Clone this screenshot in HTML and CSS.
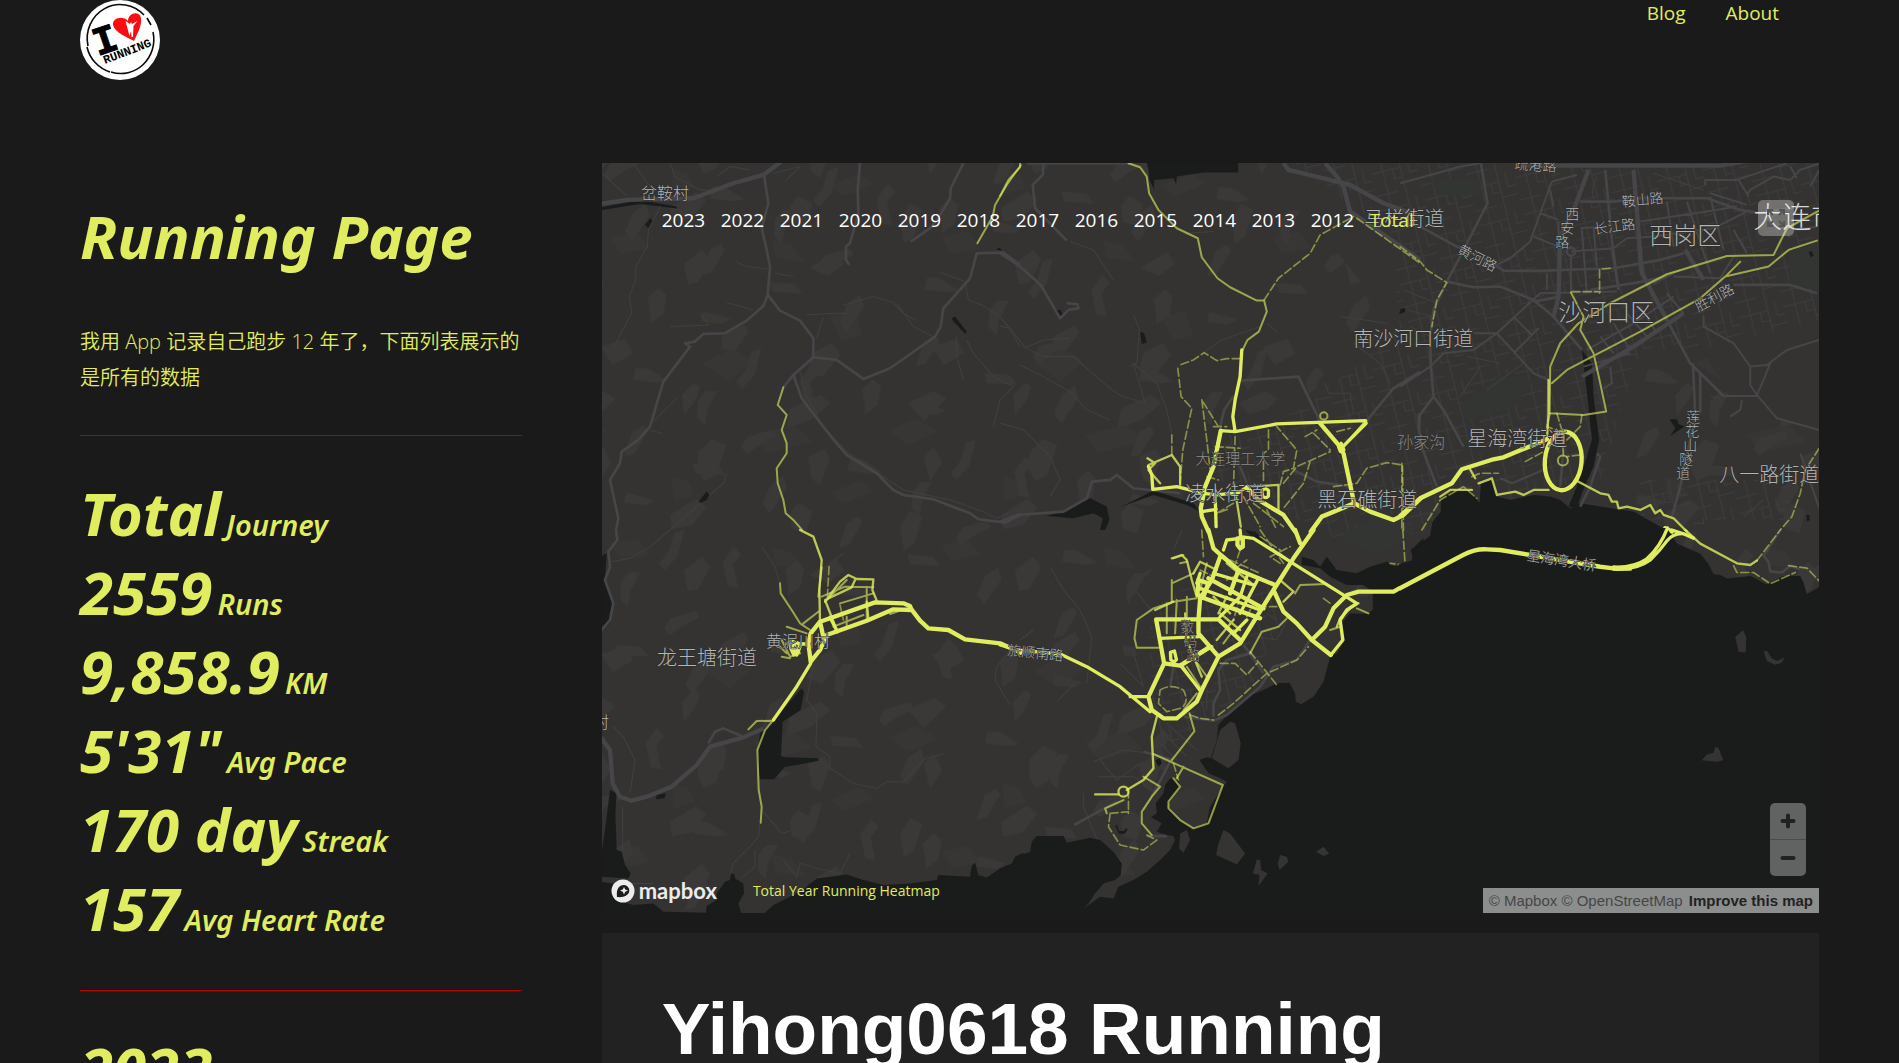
FILE: index.html
```html
<!DOCTYPE html>
<html lang="zh-CN">
<head>
<meta charset="utf-8">
<meta name="viewport" content="width=device-width, initial-scale=1">
<title>Running Page</title>
<link rel="stylesheet" href="styles.css">
</head>
<body>
<div class="page">
  <header class="site-header">
    <a class="site-logo" href="#" aria-label="Home">
      <svg viewBox="0 0 80 80" width="80" height="80">
        <circle cx="40" cy="40" r="40" fill="#fff"/>
        <path d="M8 46A33 34 0 0 1 64 15M67 18L71 25M73 32A33 34 0 0 1 31 72M30 72A34 34 0 0 1 7 47" fill="none" stroke="#0a0a0a" stroke-width="1.6"/>
        <text class="logo-i" x="29" y="52" transform="rotate(-19 29 52)">I</text>
        <path d="M54 41C47 37 35 33 33 25C32 18 43 15 48 21C48 13 59 10 61 18C62 26 57 34 54 41Z" fill="#f80d12"/>
        <path d="M45.500 21L50 24L51 22L52 24L57.500 21L53.500 26L53 37L51.500 37L51 31L49.500 36Z" fill="#fff"/>
        <text class="logo-word" x="25" y="64" transform="rotate(-21 25 64)">RUNNING</text>
      </svg>
    </a>
    <nav class="site-nav">
      <a href="#">Blog</a>
      <a href="#">About</a>
    </nav>
  </header>

  <main class="layout">
    <aside class="sidebar">
      <h1 class="title">Running Page</h1>
      <p class="intro">我用 App 记录自己跑步 12 年了，下面列表展示的是所有的数据</p>
      <hr class="rule">
      <section class="stats">
        <div class="stat"><strong>Total</strong> <span>Journey</span></div>
        <div class="stat"><strong>2559</strong> <span>Runs</span></div>
        <div class="stat"><strong>9,858.9</strong> <span>KM</span></div>
        <div class="stat"><strong>5'31"</strong> <span>Avg Pace</span></div>
        <div class="stat"><strong>170 day</strong> <span>Streak</span></div>
        <div class="stat"><strong>157</strong> <span>Avg Heart Rate</span></div>
      </section>
      <hr class="rule">
      <section class="stats">
        <div class="stat"><strong>2023</strong> <span>Journey</span></div>
      </section>
    </aside>

    <div class="content">
      <section class="map" aria-label="Running heatmap">
        <svg class="map-canvas" viewBox="602 163 1217 750" preserveAspectRatio="xMidYMid slice">
          <defs>
            <pattern id="terrain" width="331" height="307" patternUnits="userSpaceOnUse">
              <path class="patch" d="M60 30l22-12 4 8-14 18-12-2zM150 46l20-10 8 12-18 22-14-6zM270 40l24-8 8 14-20 12zM20 88l12-12 6 4-4 12-12 16zM128 102l30-14 10 8-18 16-26 10zM246 96l26-12 12 8-22 22zM36 146l14-14 14 6-10 30-12 6-6-12zM146 150l16-8 6 10-10 26-8-6zM262 150l10-10 8 16-12 18zM8 208l26-16 10 8-14 18-20 4zM128 206l8-10 14 8-6 22-14-4zM238 220l10-16 12 6-8 26-10 8zM22 264l18-14 8 10-12 22-10 2zM148 268l26-16 8 12-16 12z"/>
              <path class="patch patch-soft" d="M40 56l30-14 20 12-22 20zM168 10l24-6 8 24-20 6zM92 128l40-10 18 16-44 12zM228 124l24-12 24 12-30 14zM10 170l16 4 6 14-20 6zM168 186l30-12 14 10-30 12zM110 240l20 6 12 16-28-4zM280 238l26-6 12 16-28 6z"/>
            </pattern>
            <pattern id="ridges" width="233" height="197" patternUnits="userSpaceOnUse" patternTransform="rotate(23)">
              <path class="patch" d="M14 22l6-14 10 4 4 18-8 14-4-10zM70 12l28-4-6 8-20 6zM130 30l8-6 4 26-6 18-8-4 4-14zM190 20l10 4-4 12 14 20-10 2-14-20zM30 90l12-4 22 4-10 6-22 6zM100 96l4-12 10-4-2 20 4 16-10-4zM160 110l20-16 6 4-12 14-8 14-8-4zM52 150l8-10 6 4-4 26-8 6zM120 156l24-8 10 6-28 10zM200 146l8-14 8 10-6 30-10-6z"/>
            </pattern>
            <pattern id="blocks" width="46" height="38" patternUnits="userSpaceOnUse" patternTransform="rotate(-14)">
              <path class="lane" d="M0 7h30v16h16M12 0v38M30 0v7M30 23v15M0 30h22M22 7v10h8M38 0v14h8"/>
            </pattern>
          </defs>

          <rect x="602" y="163" width="1217" height="750" fill="#343332"/>
          <rect x="602" y="163" width="1217" height="750" fill="url(#terrain)"/>
          <rect x="602" y="163" width="1217" height="750" fill="url(#ridges)"/>
          <path fill="#343332" d="M1265 163H1819V430L1740 410 1690 330 1640 350 1600 500 1400 560 1335 600 1320 760 1250 770 1140 690 1130 600 1180 530 1190 430 1300 400 1400 330Z"/>
          <path fill="url(#blocks)" d="M1285 163H1819V320L1700 350 1640 350 1600 480 1540 490 1400 540 1340 540 1200 470 1210 440 1300 410 1400 330 1390 230ZM1150 610 1230 560 1290 600 1250 690 1150 760ZM1640 520H1790V480H1640Z"/>
          <path class="park" d="M1790 255l29-15v50l-30-5zM1460 405l40-30 35 5-30 30-38 10zM1430 180h50v15h-40zM1335 540l50-30 30 20-35 25z"/>

          <!-- north-west quarter -->
          <g transform="translate(600 150) scale(.3333)">
            <path class="lane" d="M6 70L80 138M183 165L145 240 142 290 108 350 107 390 88 440 95 490 36 600M100 40L150 110M210 40L225 80 300 120 370 120M350 80L390 50 450 60M520 70L600 50 560 90M408 335L440 350 510 358M525 370L580 380M730 465L820 440 880 458 910 490 945 510M620 495L700 490 740 490M670 500L650 565M210 530L325 525 300 490M380 458L460 480M1020 368L1095 395 1105 450 1145 465 1200 500 1225 530 1260 590M1100 570L1120 610 1180 680 1240 710 1200 750 1180 830M1070 560L1070 620 1090 690M890 460L940 530 1000 560M160 815L235 740M250 735L275 760M150 840L185 850M380 970L370 1000 210 1140M600 665L620 740 670 830 740 905 910 1020 1050 1050 1150 1085 1190 1105 1225 1090"/>
            <path class="water" d="M6 172L100 155 120 150 230 170 230 176 120 162 6 180ZM1055 505L1065 500 1100 545 1096 552 1060 515ZM135 225L150 205 158 212 145 235ZM297 1053L320 1025 328 1035 320 1050 300 1060ZM1188 300l10-7 8 8z"/>
            <path class="road road-major" d="M0 162L80 150 280 145 400 100 490 75 550 30"/>
            <path class="road" d="M492 75L505 160 485 235 500 300 510 350 503 435 490 468 440 512 375 550 310 552 285 575 255 580 270 590 190 695 150 830 115 870 65 905 60 940 30 990 55 1105 48 1140M503 435L540 482 600 512 640 565 640 622 710 630 790 687 870 655 1005 560 1022 530 1030 475 1110 385 1130 310 1210 308 1260 345M640 622L580 675 550 712M580 675L605 745 650 805 705 875 740 915 830 970 880 1020 910 1035 1000 1048 1110 1090 1135 1108 1215 1118 1260 1095M780 40L773 120 775 190 750 280 738 290 738 330 748 345M1090 40L1052 115 1050 145 1020 195 990 235 932 275"/>
            <path class="run run-2" d="M1262 46L1220 105 1185 165 1178 200 1132 280M550 712L533 765 560 795 545 840 560 880 560 910 530 955 533 1000 550 1050 557 1090 580 1110 606 1140"/>
          </g>

          <!-- north centre -->
          <g transform="translate(1000 150) scale(.3333)">
            <path class="lane" d="M0 528L30 535 75 593 130 570 210 565M60 645L130 680 210 725 260 780 330 810M75 593L130 620 220 620 300 690 350 730 370 740 435 760 400 640 470 700 500 780 515 850M0 820L70 840 150 920 180 990 150 1040M400 495L418 540 410 640 390 650M210 275L280 300 340 390M560 250L640 245M610 608L665 570 780 530M1060 580L1140 640 1170 700M1020 500L1160 520M975 700L985 730 1050 730 1060 790M800 520L830 545"/>
            <path class="water" d="M440 38H714V68H610L530 80 528 102 520 85 462 90 462 118 448 90 445 60ZM420 545l12 5 8 28-15 4zM168 480l12 0 8 14-6 6zM1195 490l18-15 2 10-10 6zM200 1080L270 1045 320 1070 328 1110 315 1140 300 1140 308 1105 280 1090 220 1105 140 1098ZM365 1070L460 1022 580 1060 600 1085 560 1065 460 1035Z"/>
            <path class="road" d="M130 40L128 75 98 105 105 175 200 272M0 310L60 350 122 405 180 505 205 480 235 475 232 463 200 460M80 40H400M722 692L895 680 960 815M1100 812L1180 715 1260 665M880 960L950 995 1050 1010M0 1115L50 1095 190 1085 260 1045 275 995 330 990 350 975 400 1015 540 1030M660 830L672 780 700 738M700 900L740 1000M1260 790L1255 840"/>
            <path class="road road-major" d="M850 40L865 60 1050 105 1150 160 1260 200M975 40L1010 80 1030 110 1050 185 1260 330"/>
            <path class="run run-2" d="M0 138L25 90 60 52 60 40M385 40L420 52 440 80 447 130 475 180 530 235 593 265 605 322 652 385 690 412 770 452 792 452 800 485 776 545 742 570 725 605"/>
            <path class="run run-dash" d="M792 450L835 385 930 310 960 255 1060 200M1070 205L1260 340M720 626L680 626 650 632 612 608 580 630 540 645M533 655L543 740 575 775 548 900 540 1000M515 855V915M605 750L620 870 630 960M608 755L655 830M645 890L720 895M840 1005L850 965 880 955 890 900 830 830M850 1000L890 950 990 905M915 860L950 840M1000 1010L1070 1000 1100 955 1160 938 1207 945 1210 1140M805 840V900L790 910V1000M930 935L910 1000 850 1075M700 1060L650 1090 690 1075M705 860L700 1010M1010 845L1050 835M940 850L990 900M640 830H680M620 980L655 990M730 1040L780 1130M760 1060L850 1130M800 1080L830 1140"/>
            <path class="run run-3" d="M445 945L515 915 540 950 540 1005M1098 812L1030 890M442 925L465 940 445 960 480 1000M740 1010L835 1005 835 1070M835 1005V1080M708 1040L722 1130"/>
            <circle class="run run-2" cx="971" cy="798" r="11"/>
            <path class="run run-4" d="M725 600L720 680 705 750 698 800 705 845L830 822 1095 812 1098 820 1030 888M705 845L662 842 640 950 615 1010M445 950L455 975 458 1018 530 1010 610 1030 650 1035 715 1028 740 1012M645 1035L648 1130M605 1085L648 1078"/>
            <path class="run run-5" d="M662 842L640 950 615 1010L602 1075 605 1100 625 1145M960 820L1015 885 1030 910 1062 1060 965 1100 932 1145M1062 1060L1110 1085 1180 1110 1210 1095 1262 1045M740 1012L775 1050 850 1095 885 1145"/>
            <path class="run run-4" d="M785 1022q12-10 20 0v16q-8 10-18 0zM1015 890l8-10 8 20-10 5z"/>
          </g>

          <!-- north-east city -->
          <g transform="translate(1400 150) scale(.3333)">
            <path class="water" d="M90 1155L97 1115 122 1085 122 1052 160 1020 210 1022 238 1060 242 1000 275 985 290 1040 330 1050 400 1035 450 1040 480 1050 510 1075 540 1060 600 1070 700 1085 780 1130 830 1155ZM545 600L575 640 580 740 597 870 580 950 545 1030 530 1075 505 1070 530 1010 560 920 575 870 565 770ZM808 808L830 808 835 822 853 830 810 858 825 835ZM1225 305l10 0 5 12-8 6zM0 478l15-4-3 12-12 2zM1218 1095h10v15l-8 5z"/>
            <path class="road road-thin" d="M0 100L110 70 180 50 240 40M455 95L420 190 390 275 330 325 290 345M455 95L530 75M420 190L475 210M400 260L475 290M475 215V440M512 320V430M545 240L560 430M580 230L590 350M512 305L640 295 680 265 760 260 940 235 1050 180M720 215L920 185 1010 170M640 300L655 420M540 235L580 232M800 155L820 290M860 155L930 370M930 140L970 300M820 380L960 385 1000 320M760 400L840 360M550 650L690 610M560 600L700 520 820 440M600 560L640 610M640 520L690 600M680 490L740 560M720 470L770 550M800 430L850 490M290 550L420 430 650 425M290 550L400 670 445 690M340 500L395 555M340 610L415 535M290 550L220 600 130 610 90 650 0 710M220 550L290 550M910 500V530L1000 580 1050 650 1100 645 1160 600 1257 570M1050 650V705L1070 735 1090 690 1110 640M970 738H1070M1025 750L1020 780 990 800M1070 735L1130 805 1257 840M630 650L635 700 610 715M1200 910L1257 1075M440 370V420M450 120L460 170M1040 135L1050 120 1120 80 1170 90 1200 60 1257 40M1170 50L1190 85M1015 90L1045 140M915 105V90H1010L1100 60 1160 40M930 130L1040 165M1230 110L1257 60M1000 240L1040 310M1190 240L1250 230M300 985L335 1000 430 960"/>
            <path class="road" d="M242 40L262 160 185 310 140 395 100 480 90 560 92 650 100 740 55 800 60 880 110 1010M140 395L220 412 300 410 400 450 460 500 545 600M0 215L60 230 170 290 260 330 310 362 410 363 640 355 780 330 850 310M540 155L640 155 720 145 920 145 1020 180 1080 190 1200 170M480 440L400 455M570 420L700 400 800 380M800 510L720 360 700 60M615 60L640 320 655 420M800 510L870 640 970 738M878 640L885 800 840 1010 815 1100M900 670V790M1000 405H1170L1250 430M445 690L440 850M190 890L130 780 100 740M590 910L600 920 570 1010 540 1070M480 1010L490 900"/>
            <path class="road road-major" d="M360 47H960L1060 30M565 60L520 180 480 260 475 440 460 500M700 60L725 370 800 510M545 680L700 590 850 490M855 300L910 390"/>
            <circle class="road" cx="512" cy="305" r="12"/>
            <path class="lane" d="M260 720L370 640M180 740L240 650M200 620L300 640M10 420L110 460M20 480L100 500M30 530L90 560M930 740L960 745M760 70L910 120M590 80Q570 120 580 150M880 1120h30v-15M1030 1100l60-50"/>
            <path class="run run-dash" d="M0 290L60 335 80 360 140 398 110 450 95 530M630 355L598 358V430M450 790L440 830 480 845M375 935L430 905M215 980L240 970 295 970M515 425H600M470 790L485 840 490 920M545 795L540 830 500 870M1257 895L1215 960 1200 1030 1175 1100 1140 1140M540 915L500 920M65 1140L120 1050 190 1010 230 1045M5 940V1140"/>
            <path class="run run-2" d="M448 790L450 650 480 580 535 520 630 460 800 373 980 318 1120 315 1160 235 1255 183M455 700L500 660 580 618 720 545 900 445 975 380 1105 350 1165 300 1250 272M512 428L550 500 540 540 580 610 600 700 618 785 550 795 450 790M975 380L1020 335"/>
            <path class="run run-3" d="M445 690V790L440 870M525 990L600 1030 625 1035 635 1055 650 1055 655 1075 680 1070 720 1080 750 1065 765 1090 780 1080 790 1095 820 1105 860 1145M205 950L225 985 M235 1000L275 985 290 1035 345 1025 370 1035 400 1020 445 1020M120 1040L150 1020 215 1020"/>
            <path class="run run-5" d="M0 1098L60 1045 155 1000 185 958 280 928 310 922 440 868M795 1135l20 10"/>
            <ellipse class="run run-5" cx="489" cy="933" rx="55" ry="88" transform="rotate(5 489 933)"/>
            <circle class="run run-2" cx="488" cy="932" r="15"/>
          </g>

          <!-- south-west coast -->
          <g transform="translate(600 530) scale(.3333)">
            <path class="lane" d="M35 95L90 85 150 50 210 0M485 50L525 110 540 160M690 100L730 70M640 410L620 510 650 550 648 650 690 680 690 715 760 760 830 775 860 755 910 755 975 685 1030 672M485 840L545 910 580 900M480 880L475 920 450 950 400 1000 390 1040M550 990L590 1040 600 1000 650 1015 720 1030 750 970M1230 360L1190 410 1185 450 1230 525M40 590L70 620 105 690 90 790M68 830V960M60 1060H160M465 960V1010L430 1040"/>
            <path class="water" d="M0 80L20 70 15 150 40 225 30 280 0 306ZM30 780L50 790 46 850 50 960 65 965 75 1005 92 1030 85 1045 0 1040V1000L15 900ZM605 475L612 485 602 540 548 575 543 678 555 682 655 685 655 692 590 705 555 710 522 748H480L470 690 480 610 500 590 530 560ZM170 795l28-5-5 15-25 3zM0 1055L40 1060 45 1110 100 1125 160 1120 190 1145 318 1148 320 1128 350 1110 350 1090 375 1055 390 1050 392 1030 403 1032 405 1045 430 1060 432 1090 415 1120 425 1155 495 1148 520 1125 550 1110 610 1080 630 1060 650 1045 740 1033 790 1050 850 1065 930 1060 1010 1050 1015 1035 1110 1040 1115 1008 1125 998 1135 1035 1160 1042 1200 1015 1235 1000 1245 980 1270 968V1160H0Z"/>
            <path class="road" d="M48 0L52 30 25 65 30 110 15 150 40 220 30 270 0 305M325 640L345 605 370 595 425 618"/>
            <path class="road road-major" d="M0 620L30 660 38 760 60 800 95 812 140 800 215 770 290 705 330 650 430 622 490 595"/>
            <path class="run run-2" d="M540 160L542 190 575 240 600 280 630 300M610 280L655 245M520 570L495 600 472 660 476 780 485 830 482 878M445 598L470 573 515 572M665 112L655 200M665 200L735 170 820 172M675 215L740 150M800 170V265M720 220L820 190M700 290L790 255M560 290L620 310M545 330L570 380 600 370M535 345L560 370M740 260V290M870 252L920 235M545 380L570 385"/>
            <path class="run run-dash" d="M687 110L682 200M720 225L730 270"/>
            <path class="run run-3" d="M600 0L640 20 665 90 658 180 660 280M675 215L720 155 745 135 770 147 820 148 817 180 830 212M675 210L755 172 765 150M675 210L710 300M800 215L805 265"/>
            <path class="run run-4" d="M632 400L590 470 520 570M560 340L620 342M570 335L590 375 600 350Z"/>
            <path class="run run-5" d="M632 395L625 340 632 310 660 275 825 217 910 220 930 228 935 240 880 238 800 272 680 315 660 360 632 395M660 275L672 330M932 235L960 272 985 295 1045 300 1095 328 1200 340 1262 368M572 335l20 5 2 25-12 8-8-18z"/>
            <path class="run run-4" d="M690 262L712 305"/>
          </g>

          <!-- south centre -->
          <g transform="translate(1000 530) scale(.3333)">
            <path class="lane" d="M150 110L190 180 240 240 275 320 260 460M405 180L460 250M60 330L100 300M280 695L370 660 450 670M250 790V830L300 950 370 1000M295 740L400 740 470 790M300 690L350 750 420 700M360 400L430 470 400 370M480 600L560 680M470 630L530 690M500 580L590 660M770 320L830 330 860 270M800 250L830 270M620 480V540M175 510L220 465M545 0L520 60"/>
            <path class="water" d="M0 1015L40 1000 50 980 90 965 95 935 110 918 190 918 200 938 270 923 300 930 340 965 365 1000 362 1035 345 1050 310 1060 285 1090 265 1120 250 1135 300 1100 340 1105 355 1070 400 1050 440 1025 480 990 510 960 525 930 520 918 500 915 470 905 485 880 452 862 470 850 467 820 490 790 495 765 510 745 535 748 540 770 520 800 500 830 540 870 580 895 620 880 630 830 668 770 680 755 660 745 625 730 598 690 620 682 632 685 650 630 655 585 690 545 740 500 790 480 830 460 868 458 885 490 887 515 903 523 940 500 970 455 990 380 1010 370 1035 330 1025 280 1050 250 1100 252 1118 240 1118 185 1090 165 1040 165 990 140 960 115 905 105 905 80 940 90 960 110 980 80 1010 120 1070 130 1110 110 1160 95 1180 108 1220 108 1240 88 1232 60 1270 25V1160H0ZM735 0L765 5 790 30 770 35ZM465 690l15-5 5 15-10 10z"/>
            <path class="land" d="M690 575L705 580 722 640 715 690 685 715 635 685 645 650 660 600ZM540 910L560 900 570 930 550 968 537 955ZM670 900L690 910 735 970 710 1003 648 975 655 940ZM770 988L780 990 783 1020 803 1030 775 1068 778 1035 758 1030ZM840 975L860 980 865 995 838 1020 833 1000ZM948 965L970 950 987 970 970 978Z"/>
            <path class="water" d="M345 885l6 0 5 18 15 0 8-10 3 6-8 12-18 0z"/>
            <path class="road" d="M550 560L640 572 680 555 780 470 820 410 890 390 930 330M640 560L640 520 660 480 655 420 680 390 750 370 730 345M750 370L790 430M222 885L350 815M430 665L520 690M510 695L460 790 430 840M510 470L520 410M500 918H440"/>
            <path class="run run-dash" d="M655 555L700 520 800 430 890 390 925 350M750 365L830 465M660 400L705 400 740 435 775 395M480 480Q510 460 550 480Q570 520 540 535L500 545 475 520ZM330 850L325 890 360 945 430 960 470 930 440 915M330 850L385 845M385 780V850M520 700L535 750M570 555L600 565 640 570M720 60L700 120 740 90M780 20L840 60M690 90L780 130M780 0L850 100M970 205L990 220M605 0L610 80M1208 0L1215 105 1170 100M720 200L700 270M760 270L790 230 830 230"/>
            <path class="run run-2" d="M475 353H410L403 325 410 270 460 235 520 215 590 205M568 550L583 603 515 690M460 672L668 765 625 880 580 895 540 870 505 835 505 815 540 770 520 745M550 710L530 745M430 740L480 770 455 800 425 845 425 880 455 915M370 810L315 835 320 850M750 370L785 305 835 290 860 265M515 150V215M500 220V310M530 210L525 310M560 200V300M515 160L580 130M540 100L560 95M670 340L700 300M560 410L600 470M585 390L620 440M520 85L550 75M1105 250L1070 235M620 100L600 180M885 190L900 165 980 162M590 490L550 540M990 300L1020 290"/>
            <path class="run run-3" d="M470 560L455 620 460 715 430 750 380 780M285 793H355M515 85L545 75 560 90 575 150 590 200M660 250L720 300M690 250L640 200M680 100L760 165M700 270L650 330M545 405L600 485M605 440L560 330 555 250M1010 290L1020 265 1050 235 1075 220M580 130L600 95 650 120M655 250L680 200M850 215L880 185 840 150M465 240L520 215"/>
            <circle class="run run-3" cx="370" cy="785" r="15"/>
            <path class="run run-4" d="M0 345L50 360 180 372 260 410 360 470 450 545M390 500L445 500M720 25L680 30 670 60M720 0L722 25M720 20L760 25 840 75 870 95 1070 220 1040 240 1020 270 1028 330 992 375M600 320L480 325M635 350L545 405M540 405L600 480M740 140L720 200 660 260M775 145L720 250M640 130L760 165M740 270L700 310M600 175L780 240M600 130L590 160"/>
            <path class="run run-5" d="M625 0L640 55 662 75 635 150 600 205 595 270V310L655 380M662 75L715 120 690 190M715 120L825 165M600 200L780 265M625 145L790 235M655 268H468L492 400 540 407 630 350M655 268L720 330M492 400L445 500 455 540 490 565 530 565 590 515 610 470 655 380 720 340 770 260 820 180 880 85 940 0M885 0L900 40M820 180L850 245 890 280 935 330 992 375M935 330L975 290 1000 235 1040 195 1075 185H1180L1262 140"/>
            <path class="run run-5" d="M595 150l30 10-15 40-18-5zM712 25h16v25l-8 5-8-10z"/>
            <path class="run run-4" d="M511 367l12-4 6 26-8 8-9-8z"/>
            <path class="run run-dash" d="M680 150L700 140M600 120L640 140M840 100L810 80 870 50M740 260L760 220"/>
          </g>

          <!-- open sea -->
          <g transform="translate(1400 530) scale(.3333 .3399)">
            <path class="water" d="M-4 100L35 90 40 60 60 40 97 12 97 -6H800L830 40 900 70 925 100 940 130 960 132 980 143 1050 135 1100 160 1150 135 1200 135 1210 155 1220 188 1262 165V1140H-4Z"/>
            <path class="land" d="M1005 315L1028 295 1038 315 1036 360 1015 358ZM1090 357L1100 355 1115 378 1130 385 1153 375 1145 390 1125 396 1100 385ZM905 677L920 660 940 655 945 638 955 642 969 677 950 682Z"/>
            <path class="road" d="M1140 0L1100 60 1090 75 1105 95 1110 122 1145 125 1170 105 1200 115"/>
            <path class="run run-dash" d="M1000 105L1010 125 1060 125 1110 158 1185 125M1070 90L1140 0M1165 105L1220 112 1257 150"/>
            <path class="run run-3" d="M855 0L900 40 1010 98 1050 103 1070 90"/>
            <path class="run run-5" d="M-2 172L190 73Q225 55 260 57L300 59 400 75 600 108 640 113 690 113"/>
            <path class="run run-4" d="M640 109Q700 112 740 85Q780 50 802 -6M640 115Q710 118 750 88Q780 60 800 32Q820 8 850 11L880 24M815 0L870 18"/>
          </g>

          <g class="labels">
            <text x="641" y="199" font-size="16">岔鞍村</text>
            <text x="657" y="665" font-size="20">龙王塘街道</text>
            <text x="766" y="647" font-size="16">黄泥川村</text>
            <text x="593" y="728" font-size="16">村</text>
            <text x="1364" y="226" font-size="20">马栏街道</text>
            <text x="1353" y="346" font-size="20">南沙河口街道</text>
            <text x="1195" y="464" font-size="15" class="label-dim">大连理工大学</text>
            <text x="1185" y="501" font-size="20">凌水街道</text>
            <text x="1317" y="507" font-size="20">黑石礁街道</text>
            <text x="1397" y="448" font-size="16" class="label-dim">孙家沟</text>
            <text x="1467" y="446" font-size="20">星海湾街道</text>
            <text x="1719" y="482" font-size="20">八一路街道</text>
            <text x="1649" y="244" font-size="24">西岗区</text>
            <text x="1558" y="321" font-size="24">沙河口区</text>
            <text x="1514" y="169" font-size="14" transform="rotate(4 1514 169)">疏港路</text>
            <text x="1622" y="207" font-size="14" transform="rotate(-6 1622 207)">鞍山路</text>
            <text x="1594" y="234" font-size="14" transform="rotate(-7 1594 234)">长江路</text>
            <text x="1456" y="253" font-size="14" transform="rotate(27 1456 253)">黄河路</text>
            <text x="1698" y="312" font-size="14" transform="rotate(-28 1698 312)">胜利路</text>
            <text x="1007" y="655" font-size="14" transform="rotate(6 1007 655)">旅顺南路</text>
            <text x="1526" y="560" font-size="14" transform="rotate(9 1526 560)">星海湾大桥</text>
            <text font-size="14" x="1565 1560 1555" y="219 233 247">西安路</text>
            <text font-size="14" x="1686 1685 1683 1679 1676" y="422 436 450 464 478">莲花山隧道</text>
            <text font-size="14" class="label-dim" x="1180 1183 1186" y="632 646 660">数码路</text>
          </g>
          <text class="label-city" x="1753" y="228">大连市</text>
        </svg>

        <ul class="years">
          <li><a href="#">2023</a></li><li><a href="#">2022</a></li><li><a href="#">2021</a></li><li><a href="#">2020</a></li><li><a href="#">2019</a></li><li><a href="#">2018</a></li><li><a href="#">2017</a></li><li><a href="#">2016</a></li><li><a href="#">2015</a></li><li><a href="#">2014</a></li><li><a href="#">2013</a></li><li><a href="#">2012</a></li><li><a class="selected" href="#">Total</a></li>
        </ul>

        <button class="map-button fullscreen" type="button" aria-label="Enter fullscreen">
          <svg viewBox="0 0 36 36" width="36" height="36"><path d="M10 15V10H15M21 10H26V15M26 21V26H21M15 26H10V21M11 11L15 15M25 11L21 15M25 25L21 21M11 25L15 21" fill="none" stroke="#555" stroke-width="2"/></svg>
        </button>

        <div class="zoom-group">
          <button class="map-button" type="button" aria-label="Zoom in">
            <svg viewBox="0 0 36 36" width="36" height="36"><path d="M18 12.500V23.500M12.500 18H23.500" stroke="#202221" stroke-width="4" stroke-linecap="round"/></svg>
          </button>
          <button class="map-button" type="button" aria-label="Zoom out">
            <svg viewBox="0 0 36 36" width="36" height="36"><path d="M12.500 18H23.500" stroke="#202221" stroke-width="4" stroke-linecap="round"/></svg>
          </button>
        </div>

        <div class="map-footer">
          <a class="mapbox-logo" href="#">
            <svg viewBox="0 0 24 24" width="24" height="24"><circle cx="12" cy="12" r="11.500" fill="#ececec"/><path d="M6 18C5 10 8 6 13 6A5.500 5.500 0 0 1 17 15C14 18 10 18.500 6 18Z" fill="#1b1c1b"/><path d="M13 8l1.200 2.600L17 11.500l-2.800 1.200L13 15.500l-1.200-2.800L9 11.500l2.800-.9z" fill="#ececec"/></svg>
            <span>mapbox</span>
          </a>
          <span class="map-caption">Total Year Running Heatmap</span>
        </div>

        <div class="attribution">
          <a href="#">© Mapbox</a> <a href="#">© OpenStreetMap</a> <a class="improve" href="#">Improve this map</a>
        </div>
      </section>

      <section class="poster">
        <h2>Yihong0618 Running</h2>
      </section>
    </div>
  </main>
</div>
</body>
</html>
```
FILE: styles.css
```css
:root {
  --accent: #e0ed5e;
  --page: #1a1a1a;
  --ui: "Open Sans", "Noto Sans CJK SC", sans-serif;
  --display: "Noto Sans", "Open Sans", sans-serif;
}

* { box-sizing: border-box; }

body {
  margin: 0;
  background: var(--page);
  color: var(--accent);
  font-family: var(--ui);
  font-size: 20px;
}

a { color: inherit; text-decoration: none; }

.page {
  height: 100vh;
  padding: 0 80px;
  overflow: hidden;
}

/* Header */
.site-header {
  display: flex;
  justify-content: space-between;
  align-items: flex-start;
  height: 163px;
}
.site-logo svg { display: block; }
.logo-i { font: bold 40px "Liberation Mono", monospace; stroke: #000; stroke-width: 1px; text-anchor: middle; }
.logo-word { font: bold 12px "Liberation Mono", monospace; }
.site-nav {
  display: flex;
  gap: 40px;
  padding-right: 40px;
  font-size: 19px;
  line-height: 26px;
}

/* Two columns */
.layout {
  display: grid;
  grid-template-columns: 3fr 7fr;
}
.sidebar { padding: 36px 80px 0 0; }

.title {
  margin: 0;
  font-family: var(--display);
  font-size: 60px;
  font-style: italic;
  font-weight: 700;
  line-height: 74px;
  white-space: nowrap;
}
.intro {
  margin: 51px 0 39px;
  font-weight: 350;
  line-height: 36px;
}
.rule {
  height: 1px;
  margin: 0;
  border: 0;
  background: #b80000;
}
.stats { padding: 38px 0 21px; }
.rule + .stats { padding-bottom: 42px; }
.stat {
  height: 79px;
  font-family: var(--display);
  font-style: italic;
  line-height: 79px;
  white-space: nowrap;
}
.stat strong { font-size: 60px; font-weight: 700; }
.stat span { font-size: 29px; font-weight: 600; }

/* Map */
.map {
  position: relative;
  height: 750px;
  overflow: hidden;
}
.map-canvas { display: block; width: 100%; height: 100%; }

.patch { fill: #3a3938; }
.patch-soft { fill: #373635; }
.park { fill: #323531; }
.land { fill: #363432; }
.water { fill: #1a1c1b; }
.lane { fill: none; stroke: #40403f; stroke-width: 3; }
#blocks .lane { stroke-width: 1; stroke: #3d3d3d; }
.road { fill: none; stroke: #464648; stroke-width: 8; stroke-linejoin: round; }
.road-thin { stroke-width: 6; }
.road-major { stroke-width: 13; }

.run { fill: none; stroke: var(--accent); stroke-linejoin: round; stroke-linecap: round; }
.run-2 { stroke-width: 6; stroke-opacity: .62; }
.run-dash { stroke-width: 5; stroke-opacity: .5; stroke-dasharray: 24 10; }
.run-3 { stroke-width: 7; stroke-opacity: .8; }
.run-4 { stroke-width: 10; }
.run-5 { stroke-width: 13; }

.labels {
  fill: #b5b5b5;
  font-family: "Noto Sans CJK SC", sans-serif;
  font-weight: 300;
  paint-order: stroke;
  stroke: #2b2b2a;
  stroke-width: 1px;
}
.label-dim { fill: #8b8b8b; }
.label-city { fill: #d8d8d8; font: 300 29px "Noto Sans CJK SC", sans-serif; }

.years {
  position: absolute;
  top: 41px;
  left: 60px;
  display: flex;
  margin: 0;
  padding: 0;
  color: #fff;
  font-size: 19px;
  font-weight: 500;
  line-height: 32px;
  list-style: none;
}
.years li { width: 59px; }
.years .selected { color: var(--accent); }

.map-button {
  display: block;
  width: 36px;
  height: 36px;
  padding: 0;
  border: 0;
  background: none;
}
.map-button svg { display: block; }
.fullscreen {
  position: absolute;
  top: 37px;
  right: 25px;
  border-radius: 5px;
  background: rgba(255, 255, 255, .3);
}
.zoom-group {
  position: absolute;
  right: 13px;
  bottom: 37px;
  border-radius: 5px;
  background: #616362;
}
.map-button + .map-button { height: 37px; border-top: 1px solid #4b4d4c; }

.map-footer {
  position: absolute;
  bottom: 6px;
  left: 9px;
  display: flex;
  align-items: center;
  gap: 36px;
}
.mapbox-logo {
  display: flex;
  align-items: center;
  gap: 4px;
  color: #ececec;
  font: 700 22px/32px Lato, sans-serif;
}
.map-caption { font-size: 14px; line-height: 32px; }

.attribution {
  position: absolute;
  right: 0;
  bottom: 0;
  padding: 0 6px;
  background: #8c8e8d;
  color: #454646;
  font: 15px/25px "Liberation Sans", Arial, sans-serif;
}
.attribution .improve { margin-left: 2px; color: #222; font-weight: 700; }

/* Poster */
.poster {
  margin-top: 20px;
  padding: 50px 60px;
  background: #222;
  color: #fff;
}
.poster h2 {
  margin: 0;
  font: 700 73px/92px "Liberation Sans", Arial, sans-serif;
}
```
